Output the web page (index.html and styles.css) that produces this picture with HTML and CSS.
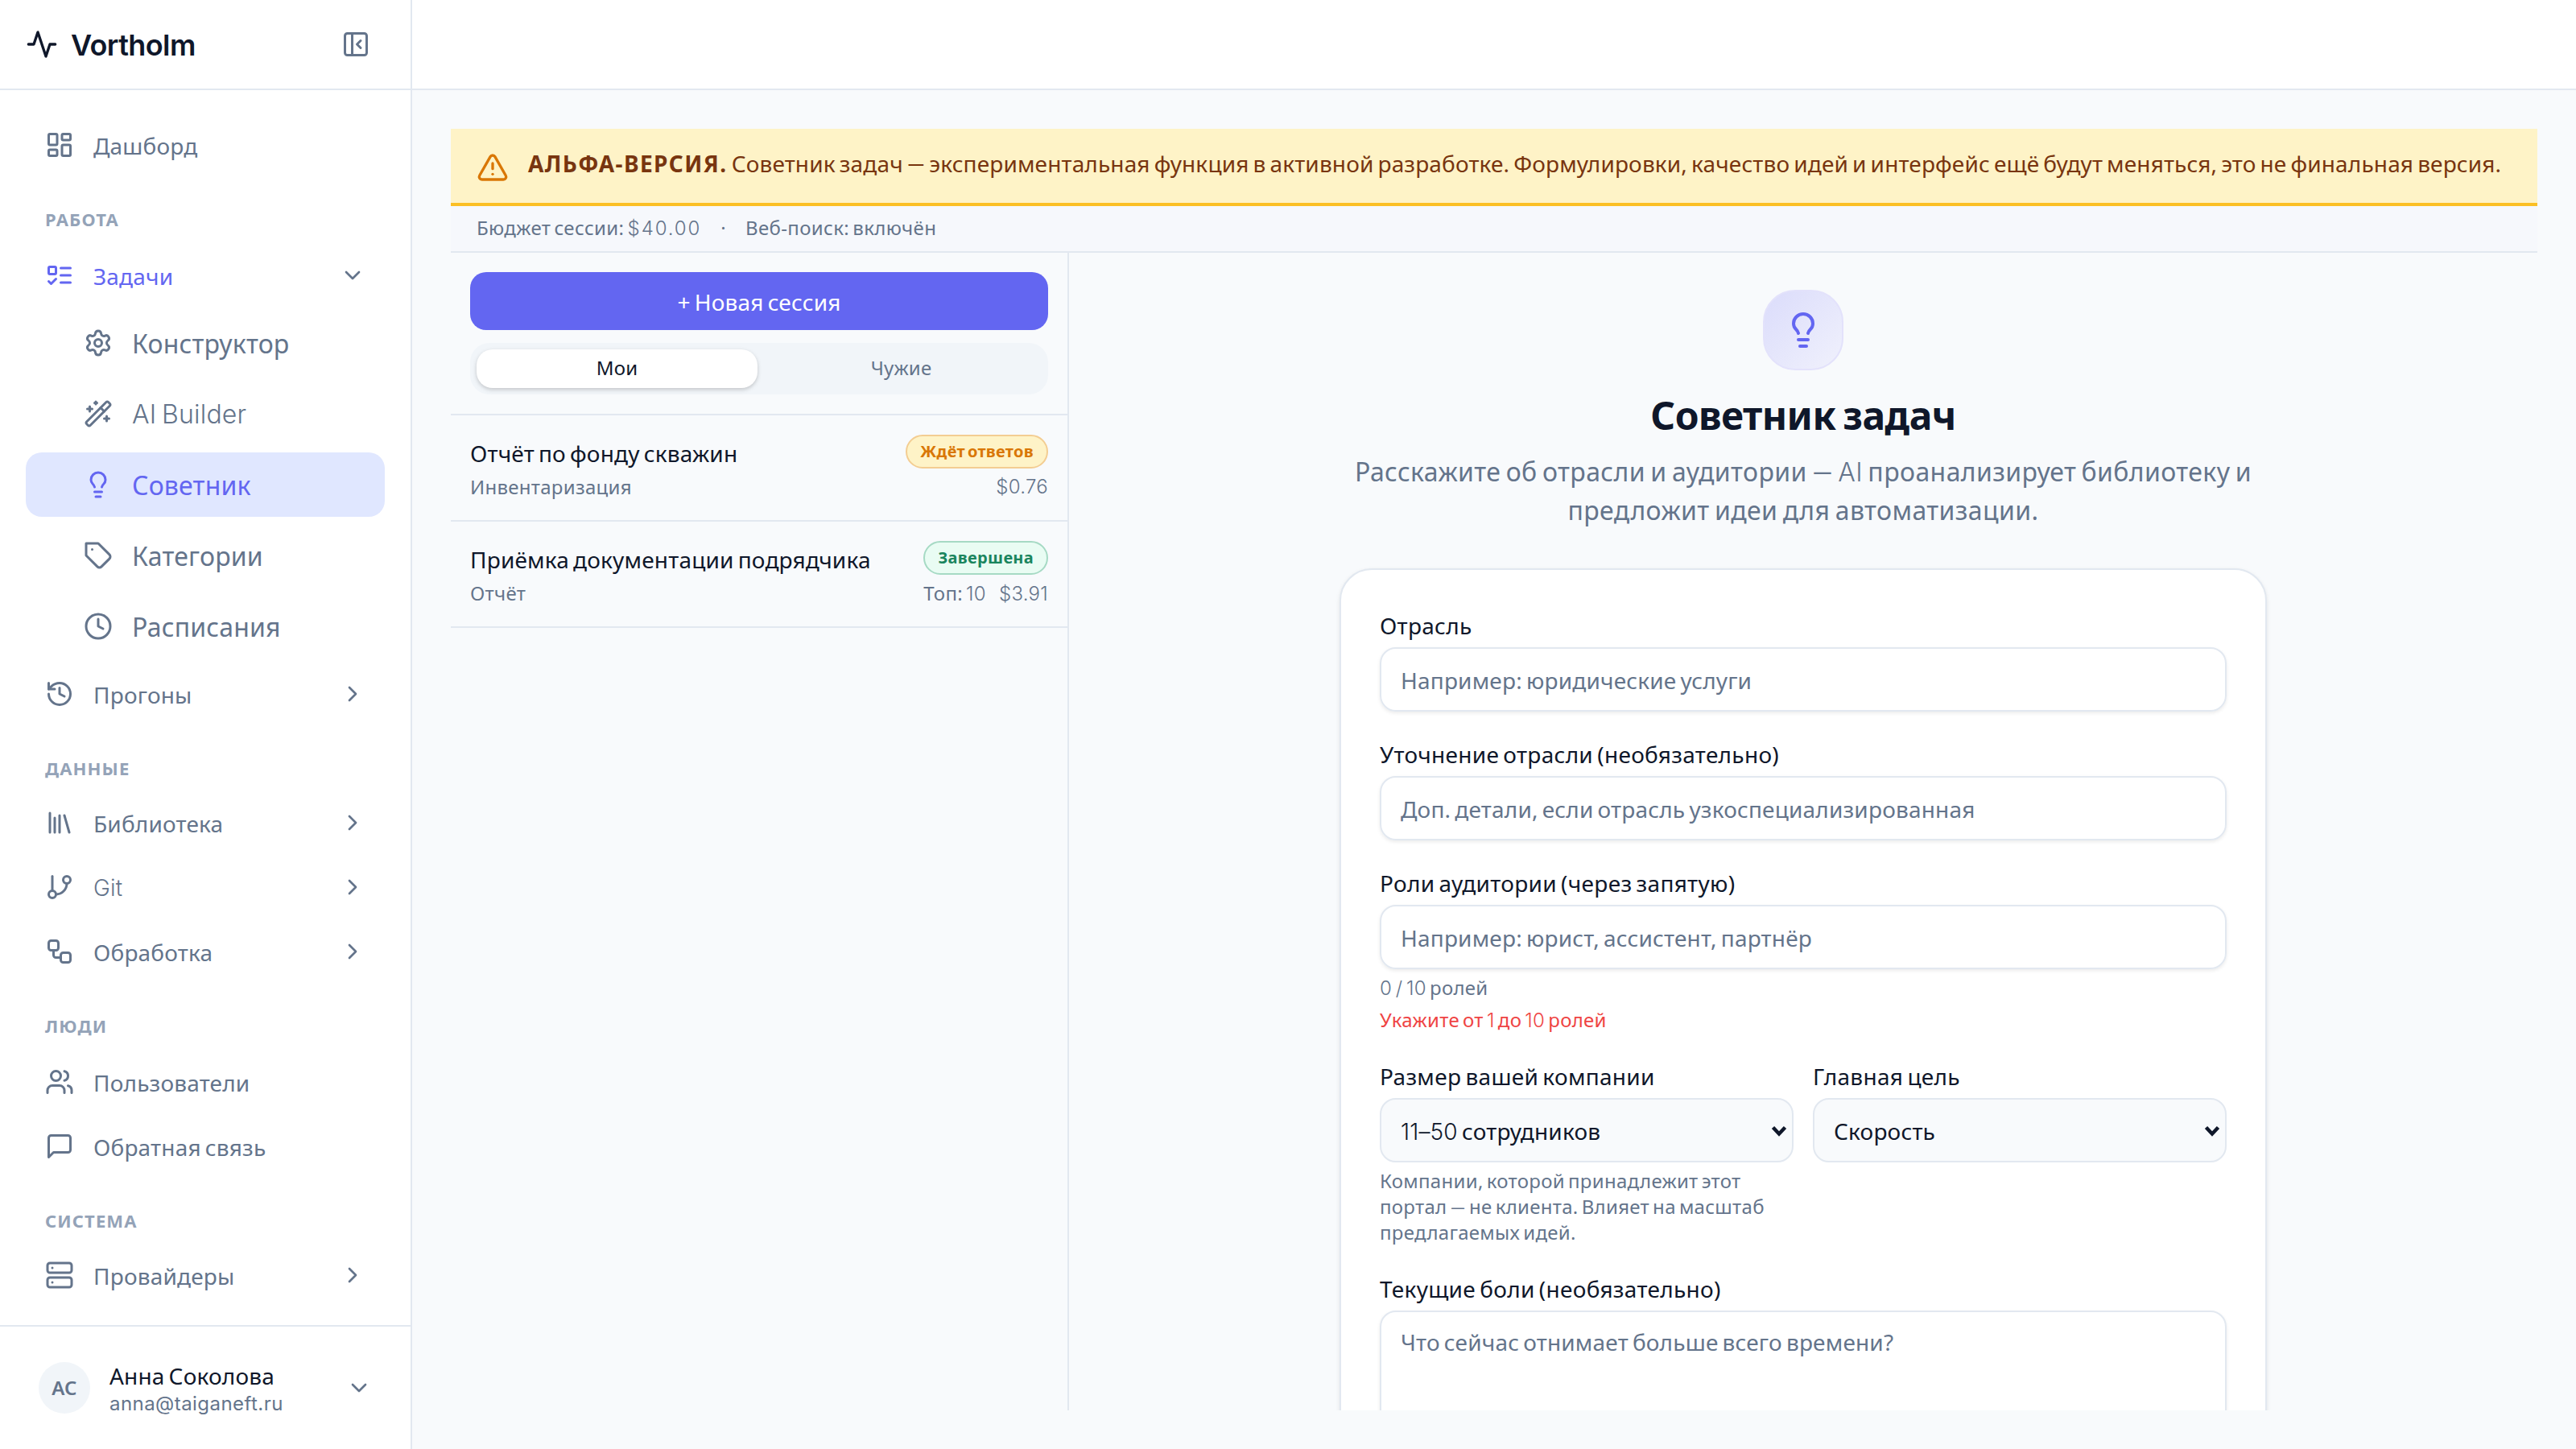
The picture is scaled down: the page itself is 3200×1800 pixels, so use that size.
FILE: index.html
```html
<!DOCTYPE html>
<html lang="ru">
  <head>
    <meta charset="UTF-8" />
    <meta name="viewport" content="width=device-width, initial-scale=1.0" />
    <title>Vortholm — Советник задач</title>
    <link rel="stylesheet" href="styles.css">
  </head>

  <body>
    <div class="app">
      <!-- Боковое меню -->
      <aside class="sidebar">
        <div class="brand">
          <svg class="icon icon-logo" viewBox="0 0 24 24"><path d="M22 12h-4l-3 9L9 3l-3 9H2"/></svg>
          <span class="brand-name">Vortholm</span>
          <svg class="icon" viewBox="0 0 24 24"><rect width="18" height="18" x="3" y="3" rx="2"/><path d="M9 3v18"/><path d="m16 15-3-3 3-3"/></svg>
        </div>

        <nav class="nav">
          <a class="nav-item">
            <svg class="icon" viewBox="0 0 24 24"><rect width="7" height="9" x="3" y="3" rx="1"/><rect width="7" height="5" x="14" y="3" rx="1"/><rect width="7" height="9" x="14" y="12" rx="1"/><rect width="7" height="5" x="3" y="16" rx="1"/></svg>
            <span>Дашборд</span>
          </a>

          <div class="nav-label">Работа</div>
          <a class="nav-item current">
            <svg class="icon" viewBox="0 0 24 24"><rect x="3" y="5" width="6" height="6" rx="1"/><path d="m3 17 2 2 4-4"/><path d="M13 6h8"/><path d="M13 12h8"/><path d="M13 18h8"/></svg>
            <span>Задачи</span>
            <svg class="icon chevron" viewBox="0 0 24 24"><path d="m6 9 6 6 6-6"/></svg>
          </a>
          <div class="subnav">
            <a class="subnav-item">
              <svg class="icon" viewBox="0 0 24 24"><path d="M9.671 4.136a2.34 2.34 0 0 1 4.659 0 2.34 2.34 0 0 0 3.319 1.915 2.34 2.34 0 0 1 2.33 4.033 2.34 2.34 0 0 0 0 3.831 2.34 2.34 0 0 1-2.33 4.033 2.34 2.34 0 0 0-3.319 1.915 2.34 2.34 0 0 1-4.659 0 2.34 2.34 0 0 0-3.32-1.915 2.34 2.34 0 0 1-2.33-4.033 2.34 2.34 0 0 0 0-3.831A2.34 2.34 0 0 1 6.35 6.051a2.34 2.34 0 0 0 3.319-1.915"/><circle cx="12" cy="12" r="3"/></svg>
              <span>Конструктор</span>
            </a>
            <a class="subnav-item">
              <svg class="icon" viewBox="0 0 24 24"><path d="m21.64 3.64-1.28-1.28a1.21 1.21 0 0 0-1.72 0L2.36 18.64a1.21 1.21 0 0 0 0 1.72l1.28 1.28a1.2 1.2 0 0 0 1.72 0L21.64 5.36a1.2 1.2 0 0 0 0-1.72"/><path d="m14 7 3 3"/><path d="M5 6v4"/><path d="M19 14v4"/><path d="M10 2v2"/><path d="M7 8H3"/><path d="M21 16h-4"/><path d="M11 3H9"/></svg>
              <span class="lat">AI Builder</span>
            </a>
            <a class="subnav-item active">
              <svg class="icon" viewBox="0 0 24 24"><path d="M15 14c.2-1 .7-1.7 1.5-2.5 1-.9 1.5-2.2 1.5-3.5A6 6 0 0 0 6 8c0 1 .2 2.2 1.5 3.5.7.7 1.3 1.5 1.5 2.5"/><path d="M9 18h6"/><path d="M10 22h4"/></svg>
              <span>Советник</span>
            </a>
            <a class="subnav-item">
              <svg class="icon" viewBox="0 0 24 24"><path d="M12 2H2v10l9.29 9.29c.94.94 2.48.94 3.42 0l6.58-6.58c.94-.94.94-2.48 0-3.42L12 2Z"/><path d="M7 7h.01"/></svg>
              <span>Категории</span>
            </a>
            <a class="subnav-item">
              <svg class="icon" viewBox="0 0 24 24"><circle cx="12" cy="12" r="10"/><path d="M12 6v6l4 2"/></svg>
              <span>Расписания</span>
            </a>
          </div>
          <a class="nav-item">
            <svg class="icon" viewBox="0 0 24 24"><path d="M3 12a9 9 0 1 0 9-9 9.75 9.75 0 0 0-6.74 2.74L3 8"/><path d="M3 3v5h5"/><path d="M12 7v5l4 2"/></svg>
            <span>Прогоны</span>
            <svg class="icon chevron" viewBox="0 0 24 24"><path d="m9 18 6-6-6-6"/></svg>
          </a>

          <div class="nav-label tight">Данные</div>
          <a class="nav-item">
            <svg class="icon" viewBox="0 0 24 24"><path d="m16 6 4 14"/><path d="M12 6v14"/><path d="M8 8v12"/><path d="M4 4v16"/></svg>
            <span>Библиотека</span>
            <svg class="icon chevron" viewBox="0 0 24 24"><path d="m9 18 6-6-6-6"/></svg>
          </a>
          <a class="nav-item">
            <svg class="icon" viewBox="0 0 24 24"><path d="M6 3v12"/><circle cx="18" cy="6" r="3"/><circle cx="6" cy="18" r="3"/><path d="M18 9a9 9 0 0 1-9 9"/></svg>
            <span class="lat">Git</span>
            <svg class="icon chevron" viewBox="0 0 24 24"><path d="m9 18 6-6-6-6"/></svg>
          </a>
          <a class="nav-item">
            <svg class="icon" viewBox="0 0 24 24"><rect width="8" height="8" x="3" y="3" rx="2"/><path d="M7 11v4a2 2 0 0 0 2 2h4"/><rect width="8" height="8" x="13" y="13" rx="2"/></svg>
            <span>Обработка</span>
            <svg class="icon chevron" viewBox="0 0 24 24"><path d="m9 18 6-6-6-6"/></svg>
          </a>

          <div class="nav-label">Люди</div>
          <a class="nav-item">
            <svg class="icon" viewBox="0 0 24 24"><path d="M16 21v-2a4 4 0 0 0-4-4H6a4 4 0 0 0-4 4v2"/><circle cx="9" cy="7" r="4"/><path d="M22 21v-2a4 4 0 0 0-3-3.87"/><path d="M16 3.13a4 4 0 0 1 0 7.75"/></svg>
            <span>Пользователи</span>
          </a>
          <a class="nav-item">
            <svg class="icon" viewBox="0 0 24 24"><path d="M21 15a2 2 0 0 1-2 2H7l-4 4V5a2 2 0 0 1 2-2h14a2 2 0 0 1 2 2z"/></svg>
            <span>Обратная связь</span>
          </a>

          <div class="nav-label tight">Система</div>
          <a class="nav-item">
            <svg class="icon" viewBox="0 0 24 24"><rect width="20" height="8" x="2" y="2" rx="2"/><rect width="20" height="8" x="2" y="14" rx="2"/><path d="M6 6h.01"/><path d="M6 18h.01"/></svg>
            <span>Провайдеры</span>
            <svg class="icon chevron" viewBox="0 0 24 24"><path d="m9 18 6-6-6-6"/></svg>
          </a>
        </nav>

        <!-- Текущий пользователь -->
        <div class="user">
          <div class="avatar">АС</div>
          <div class="user-info">
            <div class="user-name">Анна Соколова</div>
            <div class="user-email">anna@taiganeft.ru</div>
          </div>
          <svg class="icon chevron" viewBox="0 0 24 24"><path d="m6 9 6 6 6-6"/></svg>
        </div>
      </aside>

      <div class="main">
        <header class="topbar"></header>

        <div class="content">
          <div class="alert">
            <svg class="icon alert-icon" viewBox="0 0 24 24"><path d="m21.73 18-8-14a2 2 0 0 0-3.48 0l-8 14A2 2 0 0 0 4 21h16a2 2 0 0 0 1.73-3"/><path d="M12 9v4"/><path d="M12 17h.01"/></svg>
            <p><strong>АЛЬФА-ВЕРСИЯ.</strong> Советник задач <span class="dash">—</span> экспериментальная функция в активной разработке. Формулировки, качество идей и интерфейс ещё будут меняться, это не финальная версия.</p>
          </div>
          <div class="infobar">
            <span>Бюджет сессии: <span class="lat">$40.00</span></span>
            <span>·</span>
            <span>Веб-поиск: включён</span>
          </div>

          <div class="columns">
            <!-- Список сессий -->
            <section class="sessions">
              <div class="sessions-head">
                <button class="btn-new">+ Новая сессия</button>
                <div class="tabs">
                  <div class="tab selected">Мои</div>
                  <div class="tab">Чужие</div>
                </div>
              </div>
              <div class="session">
                <div class="session-row">
                  <span class="session-title">Отчёт по фонду скважин</span>
                  <span class="badge badge-wait">Ждёт ответов</span>
                </div>
                <div class="session-meta">
                  <span>Инвентаризация</span>
                  <span class="lat">$0.76</span>
                </div>
              </div>
              <div class="session">
                <div class="session-row">
                  <span class="session-title">Приёмка документации подрядчика</span>
                  <span class="badge badge-done">Завершена</span>
                </div>
                <div class="session-meta">
                  <span>Отчёт</span>
                  <span class="session-nums"><span>Топ: <span class="lat">10</span></span><span class="lat">$3.91</span></span>
                </div>
              </div>
            </section>

            <!-- Форма новой сессии -->
            <section class="advisor">
              <div class="hero-icon">
                <svg class="icon" viewBox="0 0 24 24"><path d="M15 14c.2-1 .7-1.7 1.5-2.5 1-.9 1.5-2.2 1.5-3.5A6 6 0 0 0 6 8c0 1 .2 2.2 1.5 3.5.7.7 1.3 1.5 1.5 2.5"/><path d="M9 18h6"/><path d="M10 22h4"/></svg>
              </div>
              <h1>Советник задач</h1>
              <p class="lead">Расскажите об отрасли и аудитории <span class="dash">—</span> <span class="lat">AI</span> проанализирует библиотеку и<br>предложит идеи для автоматизации.</p>

              <div class="card">
                <div class="field">
                  <div class="label">Отрасль</div>
                  <div class="input">Например: юридические услуги</div>
                </div>
                <div class="field">
                  <div class="label">Уточнение отрасли (необязательно)</div>
                  <div class="input">Доп. детали, если отрасль узкоспециализированная</div>
                </div>
                <div class="field">
                  <div class="label">Роли аудитории (через запятую)</div>
                  <div class="input">Например: юрист, ассистент, партнёр</div>
                  <div class="hint"><span class="lat">0 / 10</span> ролей</div>
                  <div class="hint error">Укажите от <span class="lat">1</span> до <span class="lat">10</span> ролей</div>
                </div>
                <div class="field-row">
                  <div class="field">
                    <div class="label">Размер вашей компании</div>
                    <div class="select">
                      <span><span class="lat">11–50</span> сотрудников</span>
                      <svg class="select-arrow" viewBox="0 0 20 14"><path d="M2.5 2.5 10 10.5l7.5-8"/></svg>
                    </div>
                    <div class="hint">Компании, которой принадлежит этот<br>портал <span class="dash">—</span> не клиента. Влияет на масштаб<br>предлагаемых идей.</div>
                  </div>
                  <div class="field">
                    <div class="label">Главная цель</div>
                    <div class="select">
                      <span>Скорость</span>
                      <svg class="select-arrow" viewBox="0 0 20 14"><path d="M2.5 2.5 10 10.5l7.5-8"/></svg>
                    </div>
                  </div>
                </div>
                <div class="field">
                  <div class="label">Текущие боли (необязательно)</div>
                  <div class="input textarea">Что сейчас отнимает больше всего времени?</div>
                </div>
              </div>
            </section>
          </div>
        </div>
      </div>
    </div>
  </body>
</html>
```

FILE: styles.css
```css
* {
  box-sizing: border-box;
}

body {
  margin: 0;
  font-family: "Noto Sans", sans-serif;
  font-size: 28px;
  line-height: 40px;
  letter-spacing: 0.18px;
  word-spacing: -0.085em;
  color: #0f172a;
  background-color: #f8fafc;
}

p,
h1 {
  margin: 0;
}

/* Латиница и цифры */
.lat {
  font-family: Inter, "Noto Sans", sans-serif;
  font-weight: 350;
  line-height: 1;
}

.dash {
  font-family: Lato, sans-serif;
  line-height: 1;
}

.app {
  display: flex;
  width: 3200px;
  height: 1800px;
  overflow: hidden;
}

.icon {
  width: 36px;
  height: 36px;
  flex-shrink: 0;
  fill: none;
  stroke: currentColor;
  stroke-width: 2;
  stroke-linecap: round;
  stroke-linejoin: round;
}

/* Боковое меню */
.sidebar {
  display: flex;
  flex-direction: column;
  width: 512px;
  flex-shrink: 0;
  background-color: #fff;
  border-right: 2px solid #e2e8f0;
  color: #64748b;
}

.brand {
  display: flex;
  align-items: center;
  gap: 16px;
  height: 112px;
  padding: 0 50px 0 32px;
  border-bottom: 2px solid #e2e8f0;
}

.icon-logo {
  width: 40px;
  height: 40px;
  color: #0f172a;
}

.brand-name {
  flex: 1;
  padding-top: 2px;
  font-family: Inter, sans-serif;
  font-size: 36px;
  font-weight: 600;
  letter-spacing: -0.6px;
  color: #0f172a;
}

.nav {
  flex: 1;
  display: flex;
  flex-direction: column;
  padding: 32px 32px 0;
}

.nav-item {
  display: flex;
  align-items: center;
  gap: 24px;
  height: 72px;
  padding: 0 24px;
}

.nav-item span,
.subnav-item span {
  padding-top: 2px;
}

.nav-item + .nav-item {
  margin-top: 8px;
}

.nav-item.current {
  color: #6366f1;
}

.chevron {
  width: 32px;
  height: 32px;
  margin-left: auto;
  color: #64748b;
}

.nav-label {
  height: 33px;
  margin: 40px 24px 17px;
  font-size: 22px;
  line-height: 33px;
  font-weight: 700;
  letter-spacing: 1.1px;
  text-transform: uppercase;
  color: #94a3b8;
}

.nav-label.tight {
  margin-bottom: 15px;
}

.subnav {
  display: flex;
  flex-direction: column;
  gap: 8px;
  margin: 8px 0;
}

.subnav-item {
  display: flex;
  align-items: center;
  gap: 24px;
  height: 80px;
  padding-left: 72px;
  font-size: 32px;
  border-radius: 20px;
}

.subnav-item.active {
  background-color: #e0e7ff;
  color: #6366f1;
}

.user {
  display: flex;
  align-items: center;
  gap: 24px;
  height: 154px;
  padding: 0 48px;
  border-top: 2px solid #e2e8f0;
}

.avatar {
  width: 64px;
  height: 64px;
  line-height: 64px;
  border-radius: 50%;
  background-color: #f1f5f9;
  text-align: center;
  font-size: 24px;
  font-weight: 600;
}

.user-info {
  padding-top: 2px;
}

.user-name {
  line-height: 36px;
  color: #0f172a;
}

.user-email {
  padding-top: 2px;
  font-family: Inter, sans-serif;
  font-size: 24px;
  line-height: 30px;
  letter-spacing: 0.45px;
}

/* Основная область */
.main {
  flex: 1;
  display: flex;
  flex-direction: column;
}

.topbar {
  height: 112px;
  background-color: #fff;
  border-bottom: 2px solid #e2e8f0;
}

.content {
  flex: 1;
  display: flex;
  flex-direction: column;
  min-height: 0;
  padding: 48px;
}

.alert {
  display: flex;
  gap: 24px;
  padding: 23px 32px;
  height: 96px;
  background-color: #fef3c7;
  border-bottom: 4px solid #fbbf24;
  color: #78350f;
  letter-spacing: 0.14px;
  white-space: nowrap;
}

.alert strong {
  letter-spacing: 1.4px;
}

.alert-icon {
  width: 40px;
  height: 40px;
  margin-top: 5px;
  color: #d97706;
}

.infobar {
  display: flex;
  align-items: center;
  gap: 24px;
  height: 58px;
  padding: 0 32px 2px;
  font-size: 24px;
  letter-spacing: 0.35px;
  color: #64748b;
  background-color: #f6f8fc;
  border-bottom: 2px solid #e2e8f0;
}

.infobar .lat {
  letter-spacing: 1.9px;
}

.columns {
  flex: 1;
  display: flex;
  min-height: 0;
  overflow: hidden;
}

/* Список сессий */
.sessions {
  width: 768px;
  flex-shrink: 0;
  border-right: 2px solid #e2e8f0;
}

.sessions-head {
  display: flex;
  flex-direction: column;
  gap: 16px;
  padding: 24px;
  border-bottom: 2px solid #e2e8f0;
}

.btn-new {
  height: 72px;
  padding-top: 3px;
  border: 0;
  border-radius: 20px;
  background-color: #6366f1;
  color: #fff;
  font: inherit;
  letter-spacing: inherit;
  word-spacing: inherit;
}

.tabs {
  display: flex;
  gap: 4px;
  height: 64px;
  padding: 8px;
  border-radius: 24px;
  background-color: #f1f5f9;
}

.tab {
  flex: 1;
  line-height: 46px;
  border-radius: 20px;
  text-align: center;
  font-size: 24px;
  color: #64748b;
}

.tab.selected {
  background-color: #fff;
  color: #0f172a;
  box-shadow: 0 2px 6px rgba(0, 0, 0, 0.1), 0 2px 4px rgba(0, 0, 0, 0.1);
}

.session {
  display: flex;
  flex-direction: column;
  gap: 8px;
  padding: 24px;
  border-bottom: 2px solid #e2e8f0;
}

.session-row,
.session-meta {
  display: flex;
  align-items: center;
  justify-content: space-between;
}

.session-row {
  height: 42px;
}

.session-title {
  padding-top: 3px;
}

.session-meta {
  height: 32px;
  padding-bottom: 2px;
  font-size: 24px;
  letter-spacing: 0.28px;
  color: #64748b;
}

.session-nums {
  display: flex;
  align-items: baseline;
  gap: 16px;
}

.badge {
  height: 42px;
  padding: 0 16px;
  border: 2px solid;
  border-radius: 21px;
  font-size: 20px;
  line-height: 38px;
  font-weight: 700;
  letter-spacing: 0.3px;
}

.badge-wait {
  color: #d97706;
  background-color: #fef3c7;
  border-color: #f3cd92;
}

.badge-done {
  color: #1b855e;
  background-color: #e9fcf3;
  border-color: #a6dac4;
}

/* Форма */
.advisor {
  flex: 1;
  display: flex;
  flex-direction: column;
  align-items: center;
  padding-top: 46px;
}

.hero-icon {
  display: flex;
  align-items: center;
  justify-content: center;
  flex-shrink: 0;
  width: 100px;
  height: 100px;
  border: 2px solid #e3e2fb;
  border-radius: 40px;
  background: linear-gradient(135deg, #dbdcfb, #f0f1fc);
  color: #6366f1;
}

.hero-icon .icon {
  width: 48px;
  height: 48px;
}

h1 {
  margin-top: 24px;
  font-size: 48px;
  line-height: 64px;
  font-weight: 700;
  letter-spacing: -0.55px;
  word-spacing: -3px;
}

.lead {
  margin-top: 14px;
  font-size: 32px;
  line-height: 48px;
  letter-spacing: 0.4px;
  text-align: center;
  color: #64748b;
  white-space: nowrap;
}

.card {
  display: flex;
  flex-direction: column;
  flex-shrink: 0;
  gap: 32px;
  width: 1152px;
  margin-top: 48px;
  padding: 48px;
  background-color: #fff;
  border: 2px solid #e2e8f0;
  border-radius: 40px;
  box-shadow: 0 2px 6px rgba(0, 0, 0, 0.06), 0 2px 4px rgba(0, 0, 0, 0.04);
}

.field {
  display: flex;
  flex-direction: column;
  gap: 8px;
}

.field-row {
  display: grid;
  grid-template-columns: 1fr 1fr;
  gap: 24px;
}

.label {
  padding-top: 2px;
  line-height: 38px;
  letter-spacing: 0.3px;
}

.input,
.select {
  height: 80px;
  padding: 1px 24px 0;
  line-height: 76px;
  border: 2px solid #e2e8f0;
  border-radius: 20px;
}

.input {
  color: #64748b;
  box-shadow: 0 2px 4px rgba(0, 0, 0, 0.08);
}

.textarea {
  height: 200px;
  padding: 17px 24px;
  line-height: 40px;
}

.select {
  display: flex;
  align-items: center;
  justify-content: space-between;
  padding-right: 6px;
  background-color: #f8fafc;
}

.select-arrow {
  width: 20px;
  height: 14px;
  fill: none;
  stroke: #0f172a;
  stroke-width: 4.5;
}

.hint {
  margin: -1px 0 1px;
  font-size: 24px;
  line-height: 32px;
  letter-spacing: 0.28px;
  color: #64748b;
  white-space: nowrap;
}

.hint.error {
  color: #ef4444;
}
```
